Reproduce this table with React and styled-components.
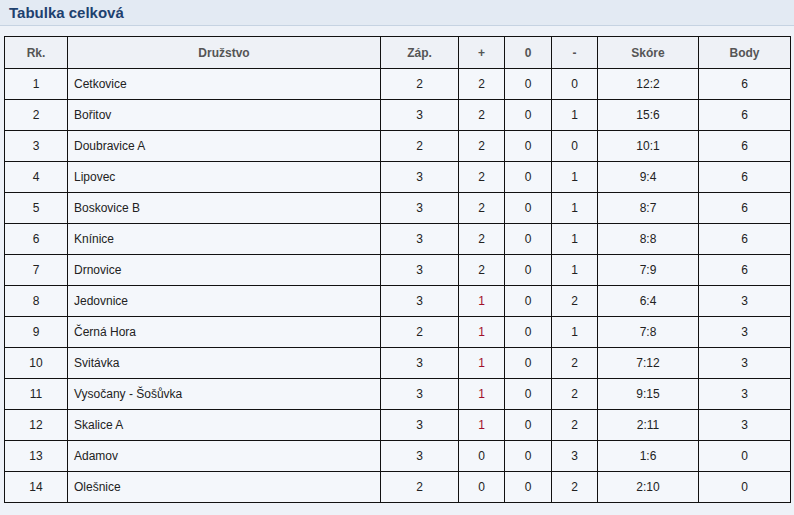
import React from 'react'
import styled, { createGlobalStyle } from 'styled-components'

const rows = [
  [1, 'Cetkovice', 2, 2, 0, 0, '12:2', 6],
  [2, 'Bořitov', 3, 2, 0, 1, '15:6', 6],
  [3, 'Doubravice A', 2, 2, 0, 0, '10:1', 6],
  [4, 'Lipovec', 3, 2, 0, 1, '9:4', 6],
  [5, 'Boskovice B', 3, 2, 0, 1, '8:7', 6],
  [6, 'Knínice', 3, 2, 0, 1, '8:8', 6],
  [7, 'Drnovice', 3, 2, 0, 1, '7:9', 6],
  [8, 'Jedovnice', 3, 1, 0, 2, '6:4', 3],
  [9, 'Černá Hora', 2, 1, 0, 1, '7:8', 3],
  [10, 'Svitávka', 3, 1, 0, 2, '7:12', 3],
  [11, 'Vysočany - Šošůvka', 3, 1, 0, 2, '9:15', 3],
  [12, 'Skalice A', 3, 1, 0, 2, '2:11', 3],
  [13, 'Adamov', 3, 0, 0, 3, '1:6', 0],
  [14, 'Olešnice', 2, 0, 0, 2, '2:10', 0],
]

const cols = [
  { label: 'Rk.', w: 63 },
  { label: 'Družstvo', w: 313 },
  { label: 'Záp.', w: 78 },
  { label: '+', w: 46 },
  { label: '0', w: 47 },
  { label: '-', w: 46 },
  { label: 'Skóre', w: 101 },
  { label: 'Body', w: 92 },
]

const Global = createGlobalStyle`
  body {
    margin:0;
    background:#eef2f8;
    font-family:"Liberation Sans", Arial, sans-serif;
  }
`

const Page = styled.div`
  width:794px;
  height:515px;
  background:#eef2f8;
`

const TitleBar = styled.div`
  height:26px;
  box-sizing:border-box;
  padding:0 9px;
  display:flex;
  align-items:center;
  background:#e3eaf3;
  border-bottom:1px solid #c6d3e2;
`

const Title = styled.h2`
  margin:0;
  font-size:15px;
  font-weight:bold;
  color:#1e416f;
`

const Wrap = styled.div`
  padding:10px 4px 0 4px;
`

const Table = styled.table`
  border-collapse:collapse;
  width:786px;
  table-layout:fixed;
  font-size:12px;
`

const Th = styled.th`
  height:31px;
  border:1px solid #111;
  background:#eef1f6;
  color:#555;
  font-weight:bold;
  text-align:center;
  padding:0;
`

const Td = styled.td`
  height:30px;
  border:1px solid #111;
  background:#f4f7fb;
  color:${p => (p.$red ? '#a0102a' : '#222')};
  text-align:${p => (p.$left ? 'left' : 'center')};
  padding:0 0 0 ${p => (p.$left ? '6px' : '0')};
`

export default function App() {
  return (
    <Page>
      <Global />
      <TitleBar>
        <Title>Tabulka celková</Title>
      </TitleBar>
      <Wrap>
        <Table>
          <colgroup>
            {cols.map(c => (
              <col key={c.label} style={{ width: c.w }} />
            ))}
          </colgroup>
          <thead>
            <tr>
              {cols.map(c => (
                <Th key={c.label}>{c.label}</Th>
              ))}
            </tr>
          </thead>
          <tbody>
            {rows.map(r => (
              <tr key={r[0]}>
                <Td>{r[0]}</Td>
                <Td $left>{r[1]}</Td>
                <Td>{r[2]}</Td>
                <Td $red={r[3] === 1}>{r[3]}</Td>
                <Td>{r[4]}</Td>
                <Td>{r[5]}</Td>
                <Td>{r[6]}</Td>
                <Td>{r[7]}</Td>
              </tr>
            ))}
          </tbody>
        </Table>
      </Wrap>
    </Page>
  )
}
